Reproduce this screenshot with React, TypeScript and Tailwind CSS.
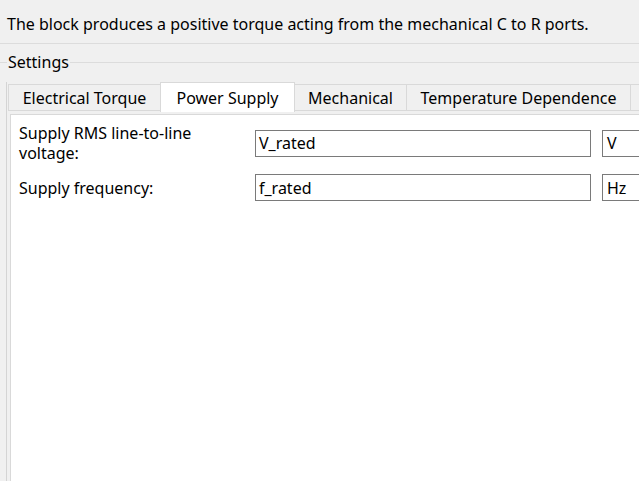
import React from 'react';

const tabs = [
  { label: 'Electrical Torque', cls: 'w-[152px] border-l' },
  { label: 'Power Supply', cls: 'w-[135px] border-l border-r', active: true },
  { label: 'Mechanical', cls: 'w-[112px] border-r' },
  { label: 'Temperature Dependence', cls: 'w-[224px] border-r' },
  { label: '', cls: 'w-[40px] border-r' },
];

function Field({ label, value, unit }: { label: string; value: string; unit: string }) {
  return (
    <div className="flex items-center">
      <div className="w-[236px] pr-[36px] leading-[20px]">{label}</div>
      <div className="w-[336px] h-[27px] border border-[#7a7a7a] bg-white flex items-center pl-[3px]">{value}</div>
      <div className="ml-[11px] w-[60px] h-[27px] border border-[#7a7a7a] bg-white flex items-center pl-[4px] shrink-0">{unit}</div>
    </div>
  );
}

export default function App() {
  return (
    <div className="w-[639px] h-[481px] bg-[#f0f0f0] overflow-hidden font-['Noto_Sans',sans-serif] text-[16px] text-black">
      {/* Description */}
      <div className="h-[44px] flex items-center pl-[7px] pt-[5px] border-b border-[#dcdcdc] whitespace-nowrap">
        The block produces a positive torque acting from the mechanical C to R ports.
      </div>

      {/* Settings group */}
      <fieldset className="mt-[8px] border-t border-[#dcdcdc] -ml-[1px]">
        <legend className="ml-[8px] px-[1px] leading-[20px]">Settings</legend>

        <div className="ml-[7px] border-l border-[#d4d4d4] h-[420px]">
          {/* Tabs */}
          <div className="flex items-end h-[29px] mt-[10px] ml-[1px] whitespace-nowrap">
            {tabs.map((t) => (
              <div
                key={t.label || 'more'}
                className={
                  t.active
                    ? `${t.cls} h-[30px] -mb-[1px] bg-white border-t border-[#d9d9d9] flex items-center justify-center shrink-0`
                    : `${t.cls} h-[27px] bg-[#f0f0f0] border-t border-b border-[#d9d9d9] flex items-center justify-center shrink-0`
                }
              >
                {t.label}
              </div>
            ))}
          </div>

          {/* Panel */}
          <div className="mt-[3px] ml-[3px] h-[380px] bg-white border-l border-t border-[#d9d9d9] pt-[8px] pl-[8px] flex flex-col gap-[11px]">
            <Field label="Supply RMS line-to-line voltage:" value="V_rated" unit="V" />
            <Field label="Supply frequency:" value="f_rated" unit="Hz" />
          </div>
        </div>
      </fieldset>
    </div>
  );
}
